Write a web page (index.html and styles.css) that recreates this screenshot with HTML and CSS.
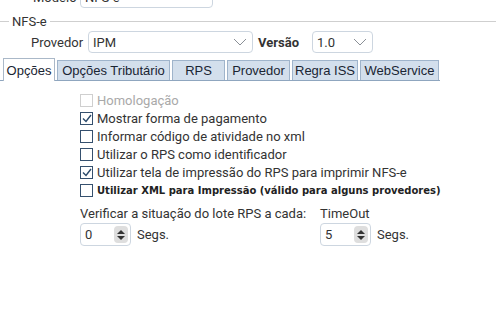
FILE: index.html
```html
<!DOCTYPE html>
<html lang="pt-BR">
<head>
    <meta charset="UTF-8">
    <title>Configuração NFS-e</title>
    <link rel="stylesheet" href="styles.css">
</head>
<body>
    <div class="row row--modelo">
        <span class="label label--modelo">Modelo</span>
        <div class="combo combo--modelo">
            <span>NFS-e</span>
            <svg class="combo__arrow" width="12" height="7" viewBox="0 0 12 7"><path d="M1 1 L6 6 L11 1" fill="none" stroke="#8a8f96" stroke-width="1"/></svg>
        </div>
    </div>

    <div class="group">
        <span class="group__line group__line--left"></span>
        <span class="group__title">NFS-e</span>
        <span class="group__line"></span>
    </div>

    <div class="row row--provedor">
        <span class="label label--provedor">Provedor</span>
        <div class="combo combo--provedor">
            <span>IPM</span>
            <svg class="combo__arrow" width="14" height="8" viewBox="0 0 14 8"><path d="M1 1 L7 7 L13 1" fill="none" stroke="#8a8f96" stroke-width="1"/></svg>
        </div>
        <span class="label label--bold">Versão</span>
        <div class="combo combo--versao">
            <span>1.0</span>
            <svg class="combo__arrow" width="14" height="8" viewBox="0 0 14 8"><path d="M1 1 L7 7 L13 1" fill="none" stroke="#8a8f96" stroke-width="1"/></svg>
        </div>
    </div>

    <div class="tabs">
        <div class="tab tab--active">Opções</div>
        <div class="tab tab--trib">Opções Tributário</div>
        <div class="tab tab--rps">RPS</div>
        <div class="tab tab--prov">Provedor</div>
        <div class="tab tab--iss">Regra ISS</div>
        <div class="tab tab--ws">WebService</div>
    </div>

    <div class="panel">
        <label class="check check--disabled"><span class="box"></span>Homologação</label>
        <label class="check"><span class="box box--on"><svg width="10" height="9" viewBox="0 0 10 9"><path d="M1 4.5 L4 7.5 L9 1" fill="none" stroke="#2b4a6b" stroke-width="1.4"/></svg></span>Mostrar forma de pagamento</label>
        <label class="check"><span class="box"></span>Informar código de atividade no xml</label>
        <label class="check"><span class="box"></span>Utilizar o RPS como identificador</label>
        <label class="check"><span class="box box--on"><svg width="10" height="9" viewBox="0 0 10 9"><path d="M1 4.5 L4 7.5 L9 1" fill="none" stroke="#2b4a6b" stroke-width="1.4"/></svg></span>Utilizar tela de impressão do RPS para imprimir NFS-e</label>
        <label class="check check--bold"><span class="box"></span>Utilizar XML para Impressão (válido para alguns provedores)</label>

        <div class="spins">
            <div class="spin-group spin-group--lote">
                <div class="spin-group__title">Verificar a situação do lote RPS a cada:</div>
                <div class="spin-row">
                    <div class="spin">
                        <span>0</span>
                        <span class="spin__btn"><i class="up"></i><i class="down"></i></span>
                    </div>
                    <span>Segs.</span>
                </div>
            </div>
            <div class="spin-group">
                <div class="spin-group__title">TimeOut</div>
                <div class="spin-row">
                    <div class="spin">
                        <span>5</span>
                        <span class="spin__btn"><i class="up"></i><i class="down"></i></span>
                    </div>
                    <span>Segs.</span>
                </div>
            </div>
        </div>
    </div>
</body>
</html>
```

FILE: styles.css
```css
html {
    box-sizing: border-box;
}
*, *::before, *::after {
    box-sizing: inherit;
}
body {
    margin: 0;
    width: 496px;
    height: 311px;
    overflow: hidden;
    background: #fff;
    font-family: Roboto, "Noto Sans", sans-serif;
    font-size: 13px;
    color: #333;
}
.row {
    display: flex;
    align-items: center;
}
.row--modelo {
    margin-top: -14px;
    height: 22px;
    padding-left: 33px;
}
.label--modelo {
    width: 47px;
}
.combo {
    display: flex;
    align-items: center;
    justify-content: space-between;
    height: 22px;
    border: 1px solid #cdd6e0;
    border-radius: 4px;
    background: #fff;
    padding: 0 5px 0 4px;
}
.combo--modelo {
    width: 133px;
}
.group {
    display: flex;
    align-items: center;
    margin-top: 5px;
    height: 16px;
}
.group__line {
    flex: 1;
    height: 1px;
    background: #cfcfcf;
}
.group__line--left {
    flex: none;
    width: 9px;
}
.group__title {
    padding: 0 3px;
}
.row--provedor {
    margin-top: 2px;
    padding-left: 31px;
}
.label--provedor {
    width: 57px;
}
.combo--provedor {
    width: 165px;
}
.label--bold {
    font-weight: bold;
    margin-left: 5px;
    width: 54px;
}
.combo--versao {
    width: 61px;
}
.tabs {
    display: flex;
    align-items: flex-end;
    margin-top: 6px;
    padding-left: 3px;
    width: 440px;
    height: 22px;
    border-bottom: 1px solid #8fa6bf;
    font-family: "Liberation Sans", Arial, sans-serif;
    font-size: 13px;
    color: #1a2533;
    white-space: nowrap;
}
.tab {
    height: 20px;
    margin-right: 2px;
    border: 1px solid #9fb4cb;
    border-bottom: none;
    background: #d3dfec;
    display: flex;
    align-items: center;
    justify-content: center;
    flex: none;
}
.tab--active {
    width: 52px;
    height: 23px;
    margin-bottom: -1px;
    background: #fff;
    border-color: #aab8c8;
}
.tab--trib {
    width: 113px;
}
.tab--rps {
    width: 53px;
}
.tab--prov {
    width: 63px;
}
.tab--iss {
    width: 66px;
}
.tab--ws {
    width: 79px;
}
.panel {
    padding: 10px 0 0 80px;
}
.check {
    display: flex;
    align-items: center;
    height: 18px;
}
.check--disabled {
    color: #a9a9a9;
}
.check--bold {
    font-family: "DejaVu Sans", Verdana, sans-serif;
    font-weight: bold;
    font-size: 10px;
    color: #222;
    height: 19px;
}
.box {
    width: 13px;
    height: 13px;
    border: 1px solid #35506e;
    margin-right: 4px;
    display: flex;
    align-items: center;
    justify-content: center;
    background: #fff;
}
.check--disabled .box {
    border-color: #cfcfcf;
}
.spins {
    display: flex;
    margin-top: 6px;
}
.spin-group--lote {
    width: 240px;
}
.spin-row {
    display: flex;
    align-items: center;
    gap: 6px;
    margin-top: 2px;
}
.spin {
    display: flex;
    align-items: center;
    justify-content: space-between;
    width: 51px;
    height: 23px;
    border: 1px solid #cdd6e0;
    border-radius: 4px;
    padding: 0 2px 0 4px;
}
.spin__btn {
    width: 14px;
    height: 17px;
    border-radius: 4px;
    background: #dedede;
    display: flex;
    flex-direction: column;
    align-items: center;
    justify-content: center;
    gap: 2px;
}
.spin__btn i {
    width: 0;
    height: 0;
    border-left: 4px solid transparent;
    border-right: 4px solid transparent;
}
.spin__btn .up {
    border-bottom: 4px solid #333;
}
.spin__btn .down {
    border-top: 4px solid #333;
}
```
